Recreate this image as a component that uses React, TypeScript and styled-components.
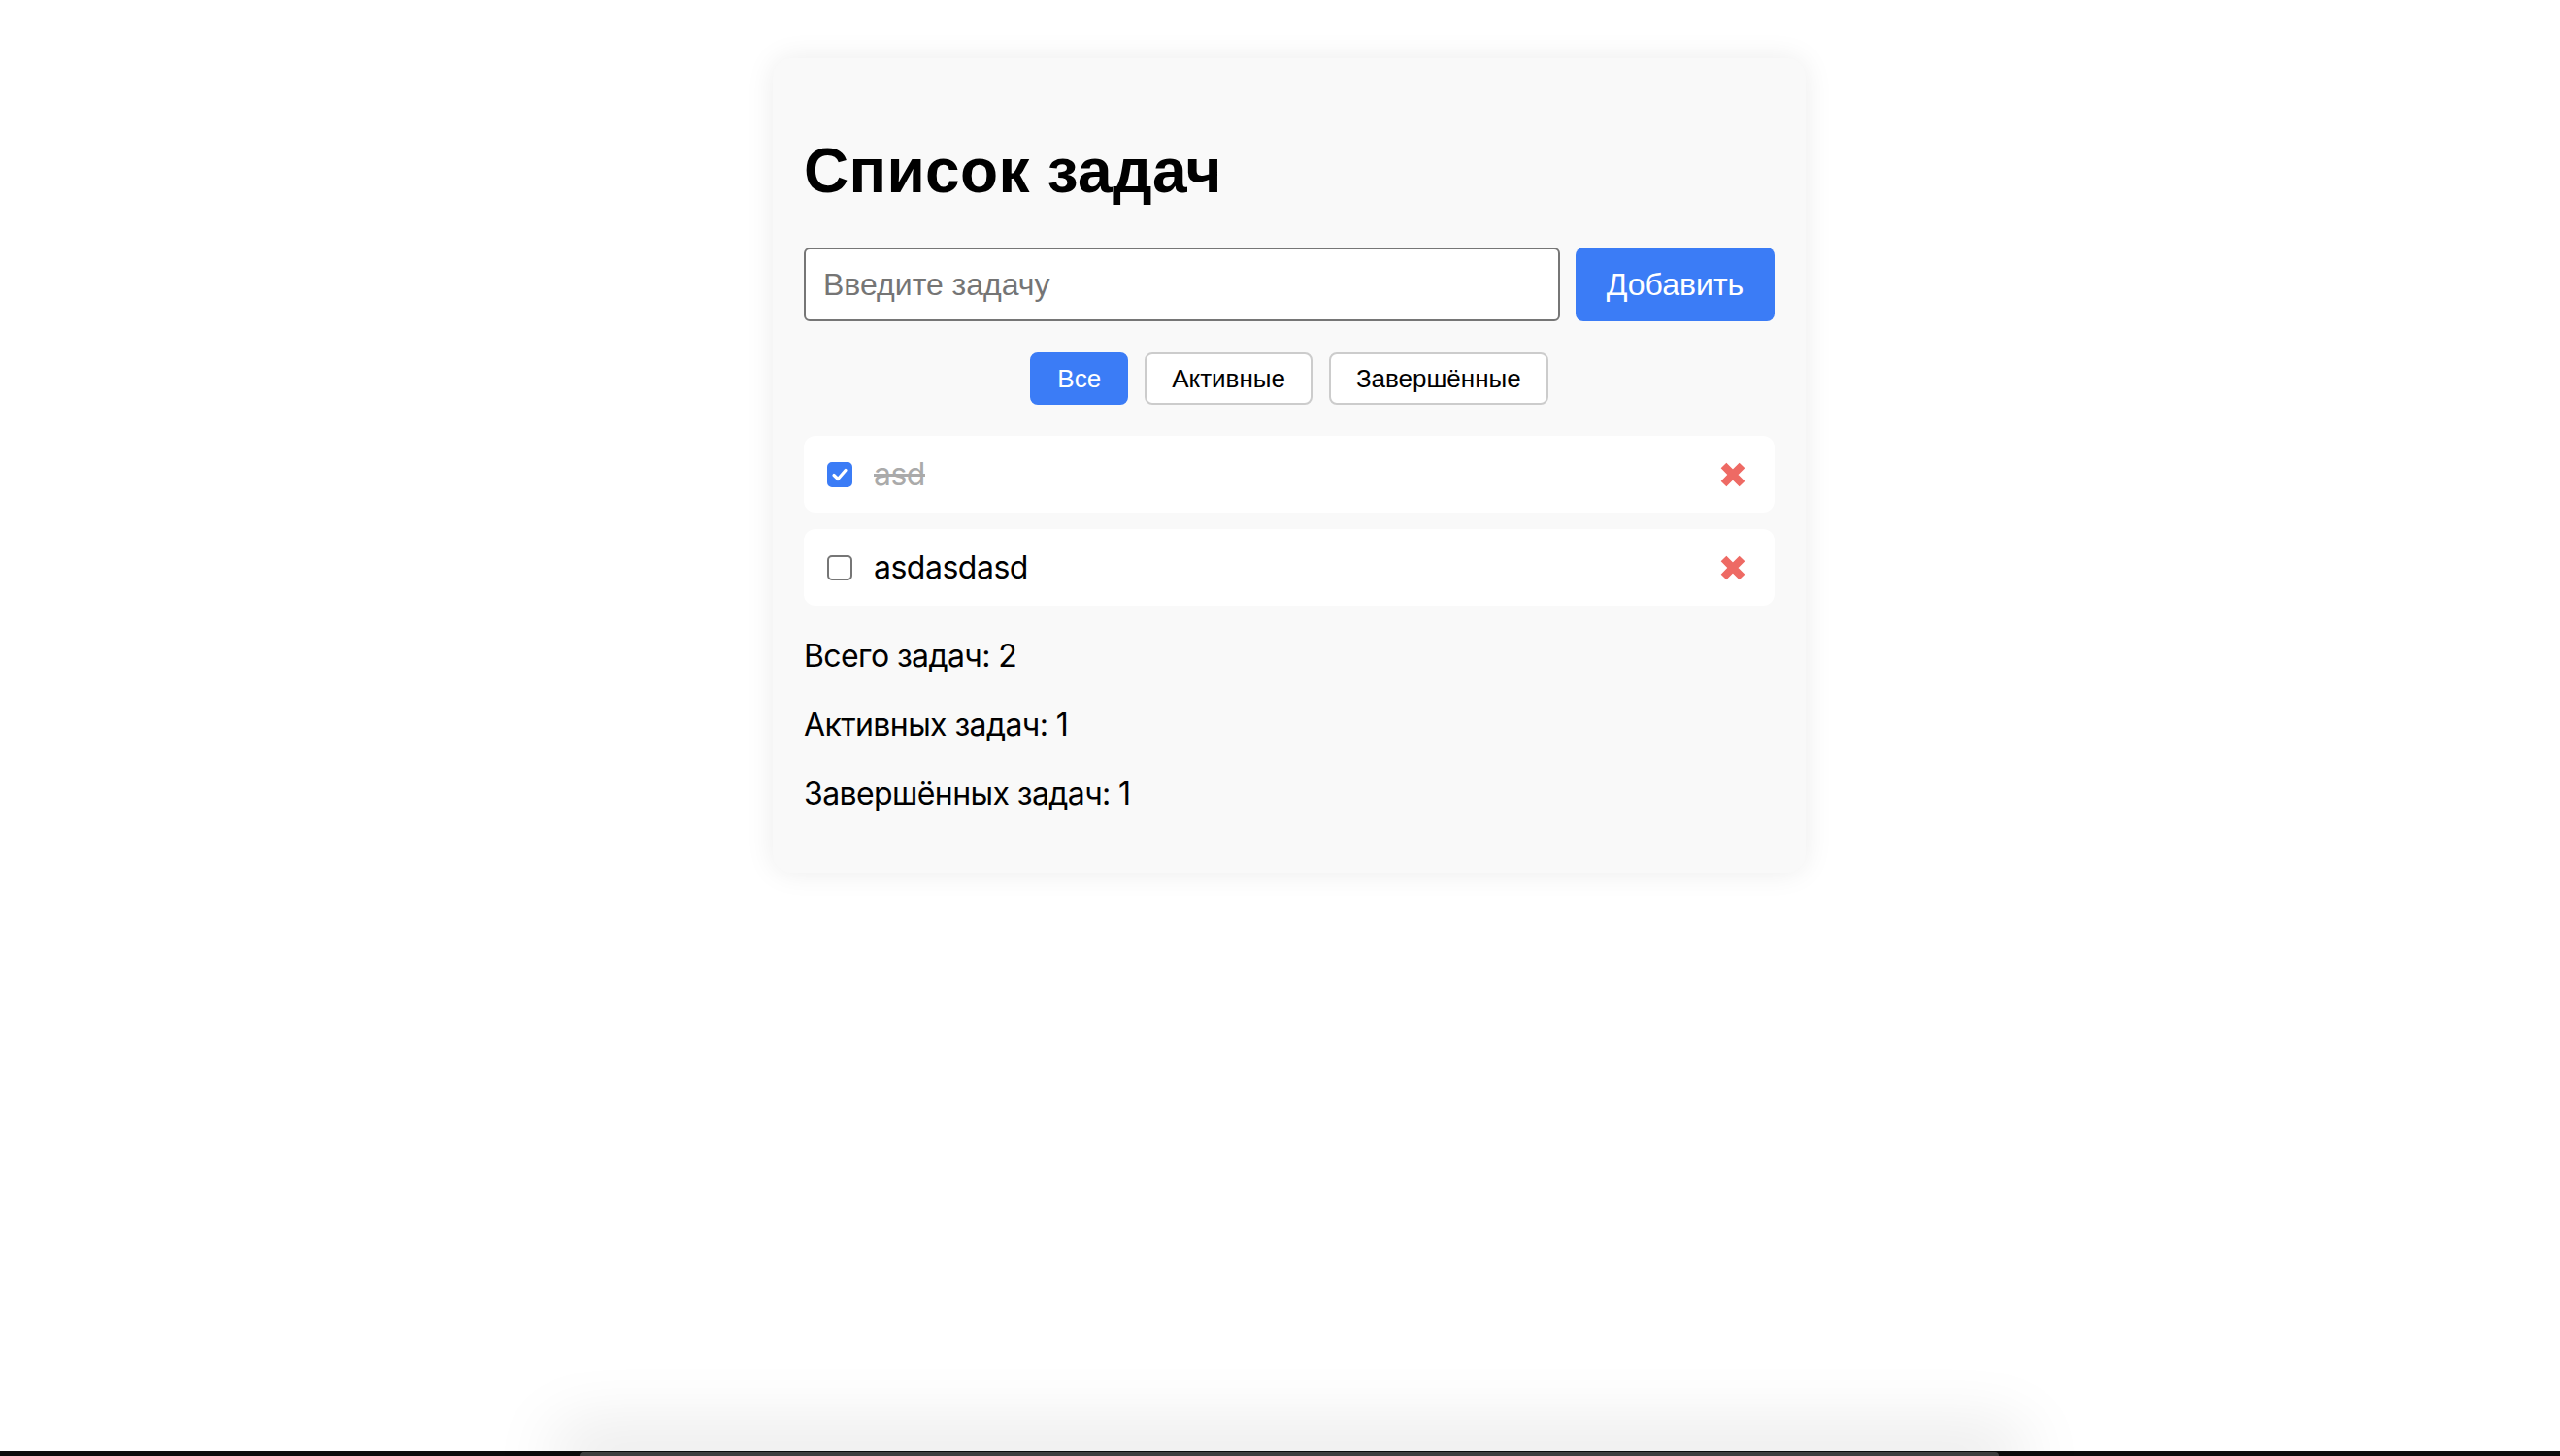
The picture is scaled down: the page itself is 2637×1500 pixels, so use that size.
import { useState } from "react";
import styled, { createGlobalStyle } from "styled-components";

type Filter = "all" | "active" | "done";

interface Task {
  id: number;
  text: string;
  done: boolean;
}

const GlobalStyle = createGlobalStyle`
  body {
    margin: 0;
    background: #ffffff;
    font-family: Inter, "Noto Sans", sans-serif;
    color: #000;
  }
`;

const Page = styled.div`
  display: flex;
  justify-content: center;
  padding: 60px 0 120px 19px;
`;

const Card = styled.div`
  width: 1000px;
  padding: 0 32px 30px;
  background: #f9f9f9;
  border-radius: 20px;
  box-shadow: 0 0 30px rgba(0, 0, 0, 0.08);
`;

const Title = styled.h1`
  margin: 80px 0 43px;
  font-family: "Liberation Sans", Arial, sans-serif;
  font-size: 64px;
  line-height: 72px;
  font-weight: 700;
  letter-spacing: 0.3px;
`;

const InputRow = styled.div`
  display: flex;
  gap: 16px;
  height: 76px;
`;

const TaskInput = styled.input`
  flex: 1;
  box-sizing: border-box;
  padding: 0 18px;
  border: 2px solid #767676;
  border-radius: 6px;
  background: #fff;
  font-family: "Liberation Sans", Arial, sans-serif;
  font-size: 32px;
  outline: none;

  &::placeholder {
    color: #757575;
  }
`;

const AddButton = styled.button`
  width: 205px;
  border: none;
  border-radius: 8px;
  background: #3b7cf6;
  color: #fff;
  font-family: "Liberation Sans", Arial, sans-serif;
  font-size: 32px;
  cursor: pointer;
`;

const Filters = styled.div`
  display: flex;
  justify-content: center;
  gap: 17px;
  margin-top: 32px;
`;

const FilterButton = styled.button<{ $active: boolean }>`
  height: 54px;
  padding: 0 26px;
  border: 2px solid ${(p) => (p.$active ? "#3b7cf6" : "#cccccc")};
  border-radius: 8px;
  background: ${(p) => (p.$active ? "#3b7cf6" : "#ffffff")};
  color: ${(p) => (p.$active ? "#ffffff" : "#000000")};
  font-family: "Liberation Sans", Arial, sans-serif;
  font-size: 26px;
  cursor: pointer;
`;

const TaskList = styled.ul`
  list-style: none;
  margin: 32px 0 0;
  padding: 0;
  display: flex;
  flex-direction: column;
  gap: 17px;
`;

const TaskRow = styled.li`
  display: flex;
  align-items: center;
  height: 79px;
  padding: 0 29px 0 24px;
  background: #fff;
  border-radius: 12px;
`;

const CheckBox = styled.button<{ $checked: boolean }>`
  display: flex;
  align-items: center;
  justify-content: center;
  width: 26px;
  height: 26px;
  padding: 0;
  box-sizing: border-box;
  border-radius: 5px;
  border: 2px solid ${(p) => (p.$checked ? "#3b7cf6" : "#767676")};
  background: ${(p) => (p.$checked ? "#3b7cf6" : "#fff")};
  cursor: pointer;
`;

const TaskText = styled.span<{ $done: boolean }>`
  flex: 1;
  margin-left: 22px;
  font-size: 32px;
  letter-spacing: -0.5px;
  color: ${(p) => (p.$done ? "#aaaaaa" : "#000")};
  text-decoration: ${(p) => (p.$done ? "line-through" : "none")};
`;

const DeleteButton = styled.button`
  display: flex;
  padding: 0;
  border: none;
  background: none;
  cursor: pointer;
`;

const Stat = styled.p`
  margin: 32px 0;
  font-size: 32px;
  letter-spacing: -0.6px;
`;

const ScreenEdge = styled.div`
  position: fixed;
  left: 0;
  right: 0;
  bottom: 0;
  height: 5px;
  background: #0c0c0c;
`;

const DockTop = styled.div`
  position: fixed;
  left: 597px;
  width: 1462px;
  bottom: 0;
  height: 4px;
  background: #3e3e3e;
  border-radius: 4px 4px 0 0;
  box-shadow: 0 0 70px 25px rgba(0, 0, 0, 0.1);
`;

function CheckIcon() {
  return (
    <svg width="18" height="18" viewBox="0 0 18 18">
      <path
        d="M3 9.5 L7.2 13.5 L15 4.5"
        fill="none"
        stroke="#fff"
        strokeWidth="3.2"
        strokeLinecap="round"
        strokeLinejoin="round"
      />
    </svg>
  );
}

function CrossIcon() {
  return (
    <svg width="28" height="28" viewBox="0 0 28 28">
      <path d="M4.5 4.5 L23.5 23.5 M23.5 4.5 L4.5 23.5" stroke="#ee6a64" strokeWidth="8" />
    </svg>
  );
}

export default function App() {
  const [tasks, setTasks] = useState<Task[]>([
    { id: 1, text: "asd", done: true },
    { id: 2, text: "asdasdasd", done: false },
  ]);
  const [filter, setFilter] = useState<Filter>("all");
  const [value, setValue] = useState("");

  const addTask = () => {
    if (!value.trim()) return;
    setTasks([...tasks, { id: Date.now(), text: value.trim(), done: false }]);
    setValue("");
  };

  const visible = tasks.filter((t) =>
    filter === "all" ? true : filter === "active" ? !t.done : t.done
  );
  const doneCount = tasks.filter((t) => t.done).length;

  return (
    <>
      <GlobalStyle />
      <Page>
        <Card>
          <Title>Список задач</Title>
          <InputRow>
            <TaskInput
              placeholder="Введите задачу"
              value={value}
              onChange={(e) => setValue(e.target.value)}
            />
            <AddButton onClick={addTask}>Добавить</AddButton>
          </InputRow>
          <Filters>
            <FilterButton $active={filter === "all"} onClick={() => setFilter("all")}>
              Все
            </FilterButton>
            <FilterButton $active={filter === "active"} onClick={() => setFilter("active")}>
              Активные
            </FilterButton>
            <FilterButton $active={filter === "done"} onClick={() => setFilter("done")}>
              Завершённые
            </FilterButton>
          </Filters>
          <TaskList>
            {visible.map((t) => (
              <TaskRow key={t.id}>
                <CheckBox
                  $checked={t.done}
                  onClick={() =>
                    setTasks(tasks.map((x) => (x.id === t.id ? { ...x, done: !x.done } : x)))
                  }
                >
                  {t.done && <CheckIcon />}
                </CheckBox>
                <TaskText $done={t.done}>{t.text}</TaskText>
                <DeleteButton onClick={() => setTasks(tasks.filter((x) => x.id !== t.id))}>
                  <CrossIcon />
                </DeleteButton>
              </TaskRow>
            ))}
          </TaskList>
          <Stat>Всего задач: {tasks.length}</Stat>
          <Stat>Активных задач: {tasks.length - doneCount}</Stat>
          <Stat>Завершённых задач: {doneCount}</Stat>
        </Card>
      </Page>
      <ScreenEdge />
      <DockTop />
    </>
  );
}
